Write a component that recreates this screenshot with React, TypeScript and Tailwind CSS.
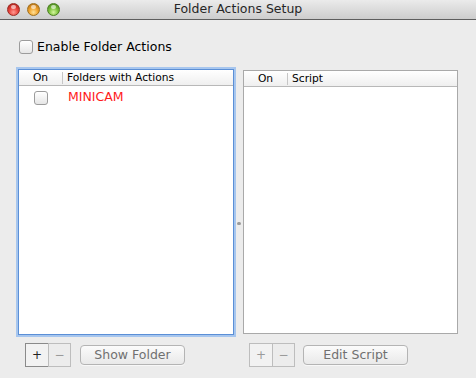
import React from "react";

const font = "font-['DejaVu_Sans',sans-serif]";

function Light({ color }: { color: "red" | "yellow" | "green" }) {
  const bg =
    color === "red"
      ? "bg-[radial-gradient(circle_at_50%_75%,#ff9a92_0%,#e8443c_45%,#a31a14_100%)] border-[#9a2a22]"
      : color === "yellow"
        ? "bg-[radial-gradient(circle_at_50%_75%,#ffe29a_0%,#f0a22c_45%,#a8640e_100%)] border-[#a0701c]"
        : "bg-[radial-gradient(circle_at_50%_75%,#d6f6a0_0%,#7cc23c_45%,#3e7a16_100%)] border-[#4c7f22]";
  return (
    <div className={`relative h-[13px] w-[13px] rounded-full border ${bg}`}>
      <div className="absolute left-[3px] top-[1px] h-[4px] w-[5px] rounded-full bg-white/60" />
    </div>
  );
}

function Check({ className = "" }: { className?: string }) {
  return (
    <div
      className={`h-[14px] w-[14px] rounded-[3px] border border-[#9c9c9c] bg-gradient-to-b from-white to-[#e6e6e6] shadow-[inset_0_1px_0_#fff] ${className}`}
    />
  );
}

function Header({ second }: { second: string }) {
  return (
    <div className="flex h-[16px] items-center border-b border-[#b8b8b8] bg-gradient-to-b from-white to-[#efefef] text-[10.7px] leading-[12px] text-black">
      <div className="flex h-[12px] w-[44px] items-center justify-center border-r border-[#c6c6c6]">
        On
      </div>
      <div className="pl-[4px]">{second}</div>
    </div>
  );
}

function PlusMinus({ active }: { active: boolean }) {
  return (
    <div className="flex h-[24px] text-[12px] leading-none">
      <div
        className={`flex w-[24px] items-center justify-center border bg-[#f2f2f2] ${
          active ? "border-[#8a8a8a] text-[#222]" : "border-[#bdbdbd] text-[#9a9a9a]"
        }`}
      >
        +
      </div>
      <div className="-ml-px flex w-[23px] items-center justify-center border border-[#bdbdbd] bg-[#ececec] text-[#9a9a9a]">
        −
      </div>
    </div>
  );
}

function PushButton({ label }: { label: string }) {
  return (
    <div className="flex h-[20px] w-[105px] items-center justify-center rounded-[4px] border border-[#b4b4b4] bg-gradient-to-b from-[#fbfbfb] to-[#e9e9e9] text-[12.5px] leading-none text-[#707070] shadow-[0_1px_0_#f8f8f8]">
      {label}
    </div>
  );
}

export default function App() {
  return (
    <div className={`h-[378px] w-[476px] overflow-hidden bg-[#ececec] ${font}`}>
      {/* title bar */}
      <div className="grid h-[20px] grid-cols-[1fr_auto_1fr] items-center border-b border-[#5e5e5e] bg-gradient-to-b from-[#ebebeb] to-[#cdcdcd]">
        <div className="flex gap-[7px] pl-[7px]">
          <Light color="red" />
          <Light color="yellow" />
          <Light color="green" />
        </div>
        <div className="text-[12.5px] leading-none text-[#262626]">Folder Actions Setup</div>
        <div />
      </div>

      {/* enable */}
      <div className="ml-[19px] mt-[20px] flex h-[14px] items-center gap-[4px] text-[12.5px] leading-[14px] text-black">
        <Check />
        <span>Enable Folder Actions</span>
      </div>

      {/* tables */}
      <div className="ml-[18px] mt-[15px] flex">
        <div className="h-[266px] w-[216px] border border-[#5b8fd6] bg-white shadow-[0_0_0_2px_#a7c6ee]">
          <Header second="Folders with Actions" />
          <div className="flex h-[20px] items-center leading-[14px]">
            <div className="flex w-[44px] justify-center pt-[3px]">
              <Check />
            </div>
            <div className="pl-[5px] pt-[2px] text-[12.5px] text-[#ff1a1a]">MINICAM</div>
          </div>
        </div>

        <div className="flex w-[9px] justify-center pt-[153px]">
          <div className="h-[3px] w-[4px] rounded-full bg-[#9a9a9a]" />
        </div>

        <div className="mt-[1px] h-[264px] w-[215px] border border-[#a9a9a9] bg-white">
          <Header second="Script" />
        </div>
      </div>

      {/* buttons */}
      <div className="mt-[8px] flex">
        <div className="ml-[25px] flex items-center gap-[9px]">
          <PlusMinus active />
          <PushButton label="Show Folder" />
        </div>
        <div className="ml-[64px] flex items-center gap-[8px]">
          <PlusMinus active={false} />
          <PushButton label="Edit Script" />
        </div>
      </div>
    </div>
  );
}
